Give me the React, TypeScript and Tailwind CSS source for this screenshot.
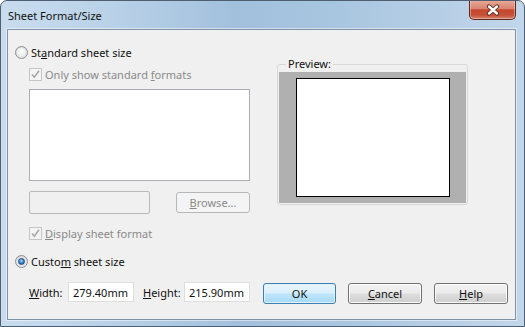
import React from "react";

const font = { fontFamily: '"Noto Sans", "Segoe UI", sans-serif' };

function Radio({ checked }: { checked?: boolean }) {
  return (
    <div className="w-[13px] h-[13px] rounded-full border border-[#8c8f91] bg-[radial-gradient(circle_at_50%_60%,#f4f4f4_0%,#e2e2e2_60%,#d0d0d0_100%)] flex items-center justify-center shrink-0">
      {checked ? (
        <div className="w-[7px] h-[7px] rounded-full bg-[radial-gradient(circle_at_45%_35%,#a9dcff_0%,#3a86cc_50%,#1a4f8c_100%)] border border-[#1c4c7e]" />
      ) : (
        <div className="w-[9px] h-[9px] rounded-full bg-[radial-gradient(circle_at_50%_40%,#ffffff_0%,#ececec_60%,#d6d6d6_100%)]" />
      )}
    </div>
  );
}

function DisabledCheck() {
  return (
    <div className="w-[13px] h-[13px] border border-[#c6c6c6] bg-[#f4f4f4] flex items-center justify-center shrink-0">
      <svg width="11" height="11" viewBox="0 0 11 11">
        <path d="M2 5.5 L4.3 8.2 L9 1.8" fill="none" stroke="#a9a9a9" strokeWidth="1.6" />
      </svg>
    </div>
  );
}

function Btn({
  children,
  w,
  isDefault,
  disabled,
}: {
  children: React.ReactNode;
  w: string;
  isDefault?: boolean;
  disabled?: boolean;
}) {
  const base =
    "h-[21px] rounded-[3px] border flex items-center justify-center text-[11px] leading-none shrink-0";
  if (disabled)
    return (
      <div className={`${base} ${w} border-[#b5b8bb] bg-[#f4f4f4] text-[#8a8a8a]`}>{children}</div>
    );
  if (isDefault)
    return (
      <div
        className={`${base} ${w} border-[#3c7fb1] text-[#111] bg-[linear-gradient(180deg,#eaf6fd_0%,#d9effc_48%,#bee6fd_52%,#a7d9f5_100%)] shadow-[inset_0_0_0_1px_#dff2fc]`}
      >
        {children}
      </div>
    );
  return (
    <div
      className={`${base} ${w} border-[#707070] text-[#111] bg-[linear-gradient(180deg,#f2f2f2_0%,#ebebeb_48%,#dddddd_52%,#cfcfcf_100%)] shadow-[inset_0_0_0_1px_#fcfcfc]`}
    >
      {children}
    </div>
  );
}

export default function App() {
  return (
    <div
      style={font}
      className="w-[525px] h-[327px] overflow-hidden rounded-t-[7px] border border-[#4f5f72] bg-[linear-gradient(90deg,#c8dcee_0%,#bad2e8_20%,#a2c0dc_45%,#a9c6e0_65%,#c2d6ea_100%)] flex flex-col text-[#111]"
    >
      <div className="h-[28px] flex items-start shrink-0">
        <div className="pl-[7px] pt-[7px] text-[11px] leading-[16px] text-[#111]">Sheet Format/Size</div>
        <div className="ml-auto mr-[8px] w-[47px] h-[20px] -mt-[1px] rounded-b-[5px] border border-t-0 border-[#5a2a22] bg-[linear-gradient(180deg,#e9ab9a_0%,#d98370_45%,#c4472d_52%,#c65038_80%,#d58470_100%)] flex items-center justify-center shadow-[inset_0_0_0_1px_rgba(255,220,210,0.45)]">
          <svg width="14" height="12" viewBox="0 0 14 12">
            <path d="M3 2.5 L11 9.5 M11 2.5 L3 9.5" stroke="#5b2a22" strokeWidth="4.2" strokeLinecap="round" />
            <path d="M3 2.5 L11 9.5 M11 2.5 L3 9.5" stroke="#ffffff" strokeWidth="2.4" strokeLinecap="round" />
          </svg>
        </div>
      </div>

      <div className="ml-[6px] mr-[8px] h-[291px] border border-[#7e93aa] bg-[#f0f0f0] shadow-[0_0_0_1px_rgba(255,255,255,0.5)] pl-[7px] pt-[16px] flex flex-col text-[11px] leading-[13px]">
        <div className="flex items-start">
          <div className="w-[235px] flex flex-col">
            <div className="flex items-center h-[13px]">
              <Radio />
              <span className="ml-[3px]">
                St<u>a</u>ndard sheet size
              </span>
            </div>
            <div className="flex items-center h-[13px] mt-[9px] ml-[14px]">
              <DisabledCheck />
              <span className="ml-[3px] text-[#8a8a8a]">
                Only show standard <u>f</u>ormats
              </span>
            </div>
            <div className="mt-[8px] ml-[14px] w-[221px] h-[92px] border border-[#abadb3] bg-white" />
            <div className="mt-[10px] ml-[14px] flex items-start">
              <div className="w-[122px] h-[23px] rounded-[2px] border border-[#b9b9b9] bg-[#f0f0f0]" />
              <div className="ml-[26px] mt-[1px]">
                <Btn w="w-[74px]" disabled>
                  <span>
                    <u>B</u>rowse...
                  </span>
                </Btn>
              </div>
            </div>
            <div className="flex items-center h-[13px] mt-[13px] ml-[14px]">
              <DisabledCheck />
              <span className="ml-[3px] text-[#8a8a8a]">
                <u>D</u>isplay sheet format
              </span>
            </div>
          </div>

          <fieldset className="ml-[27px] mt-[10px] w-[191px] border border-[#d5d9dc] rounded-[3px] px-[1px] pb-[1px]">
            <legend className="ml-[7px] px-[2px] text-[11px] leading-[16px]">Preview:</legend>
            <div className="mt-[0px] h-[131px] bg-[#b0b0b0] flex items-center justify-center">
              <div className="w-[154px] h-[119px] border border-black bg-white" />
            </div>
          </fieldset>
        </div>

        <div className="flex items-center h-[13px] mt-[15px]">
          <Radio checked />
          <span className="ml-[3px]">
            Custo<u>m</u> sheet size
          </span>
        </div>

        <div className="mt-[14px] flex items-start">
          <div className="ml-[14px] w-[39px] h-[20px] flex items-center">
            <span>
              <u>W</u>idth:
            </span>
          </div>
          <div className="w-[66px] h-[20px] border border-[#dedede] bg-white flex items-center pl-[4px]">279.40mm</div>
          <div className="ml-[9px] w-[41px] h-[20px] flex items-center">
            <span>
              <u>H</u>eight:
            </span>
          </div>
          <div className="w-[66px] h-[20px] border border-[#dedede] bg-white flex items-center pl-[4px]">215.90mm</div>
          <div className="ml-[13px] mt-[1px]">
            <Btn w="w-[73px]" isDefault>
              OK
            </Btn>
          </div>
          <div className="ml-[12px] mt-[1px]">
            <Btn w="w-[74px]">
              <span>
                <u>C</u>ancel
              </span>
            </Btn>
          </div>
          <div className="ml-[12px] mt-[1px]">
            <Btn w="w-[74px]">
              <span>
                <u>H</u>elp
              </span>
            </Btn>
          </div>
        </div>
      </div>
    </div>
  );
}
